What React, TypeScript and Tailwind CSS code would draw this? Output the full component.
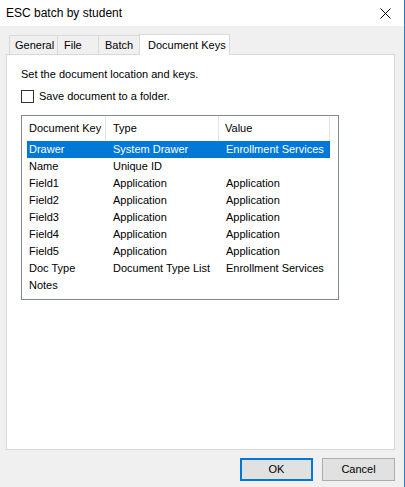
import React from 'react';

const rows = [
  { key: 'Drawer', type: 'System Drawer', value: 'Enrollment Services' },
  { key: 'Name', type: 'Unique ID', value: '' },
  { key: 'Field1', type: 'Application', value: 'Application' },
  { key: 'Field2', type: 'Application', value: 'Application' },
  { key: 'Field3', type: 'Application', value: 'Application' },
  { key: 'Field4', type: 'Application', value: 'Application' },
  { key: 'Field5', type: 'Application', value: 'Application' },
  { key: 'Doc Type', type: 'Document Type List', value: 'Enrollment Services' },
  { key: 'Notes', type: '', value: '' },
];

export default function App() {
  return (
    <div
      className="w-[405px] h-[487px] flex flex-col bg-[#f0f0f0] text-[11px] text-black border-r border-[#2b79c2] overflow-hidden whitespace-nowrap"
      style={{ fontFamily: '"Liberation Sans", Arial, sans-serif' }}
    >
      {/* Title bar */}
      <div className="h-[26px] bg-white flex items-center justify-between pl-[6px] pr-[12px] shrink-0">
        <span className="text-[12px]">ESC batch by student</span>
        <svg width="11" height="11" viewBox="0 0 11 11" className="mr-[1px]">
          <path d="M0.5 0.5 L10.5 10.5 M10.5 0.5 L0.5 10.5" stroke="#000" strokeWidth="1" />
        </svg>
      </div>

      {/* Tabs */}
      <div className="flex items-end h-[28px] pl-[9px] shrink-0">
        <div className="h-[19px] w-[49px] pl-[5px] border border-b-0 border-[#d9d9d9] bg-[#f0f0f0] flex items-center">General</div>
        <div className="h-[19px] w-[41px] pl-[6px] border border-l-0 border-b-0 border-[#d9d9d9] bg-[#f0f0f0] flex items-center">File</div>
        <div className="h-[19px] w-[41px] pl-[6px] border border-l-0 border-b-0 border-[#d9d9d9] bg-[#f0f0f0] flex items-center">Batch</div>
        <div className="h-[21px] w-[91px] pl-[8px] border border-b-0 border-[#d9d9d9] bg-white flex items-center -mb-px -ml-px relative z-10">
          Document Keys
        </div>
      </div>

      {/* Tab panel */}
      <div className="ml-[6px] w-[389px] h-[396px] bg-white border border-[#d9d9d9] pl-[14px] pt-[12px] shrink-0">
        <div className="leading-[15px]">Set the document location and keys.</div>
        <label className="flex items-center gap-[5px] mt-[6px]">
          <span className="w-[13px] h-[13px] border border-[#333] bg-white inline-block" />
          <span>Save document to a folder.</span>
        </label>

        {/* List view */}
        <div className="mt-[10px] w-[318px] h-[185px] border border-[#828790] bg-white">
          <div className="flex h-[25px] items-center">
            <div className="w-[84px] h-full pl-[7px] flex items-center border-r border-[#e5e5e5]">Document Key</div>
            <div className="w-[113px] h-full pl-[7px] flex items-center border-r border-[#e5e5e5]">Type</div>
            <div className="w-[111px] h-full pl-[6px] flex items-center border-r border-[#e5e5e5]">Value</div>
          </div>
          <div className="pl-[5px]">
            {rows.map((r, i) => (
              <div
                key={r.key}
                className={`flex h-[17px] items-center w-[303px] ${i === 0 ? 'bg-[#0078d7] text-white' : ''}`}
              >
                <div className="w-[86px] pl-[2px]">{r.key}</div>
                <div className="w-[113px]">{r.type}</div>
                <div className="flex-1">{r.value}</div>
              </div>
            ))}
          </div>
        </div>
      </div>

      {/* Buttons */}
      <div className="flex justify-end gap-[9px] pr-[9px] mt-[8px]">
        <button
          type="button"
          className="w-[73px] h-[23px] bg-[#e1e1e1] border-2 border-[#0078d7] flex items-center justify-center"
        >
          OK
        </button>
        <button
          type="button"
          className="w-[73px] h-[23px] bg-[#e1e1e1] border border-[#adadad] flex items-center justify-center"
        >
          Cancel
        </button>
      </div>
    </div>
  );
}
